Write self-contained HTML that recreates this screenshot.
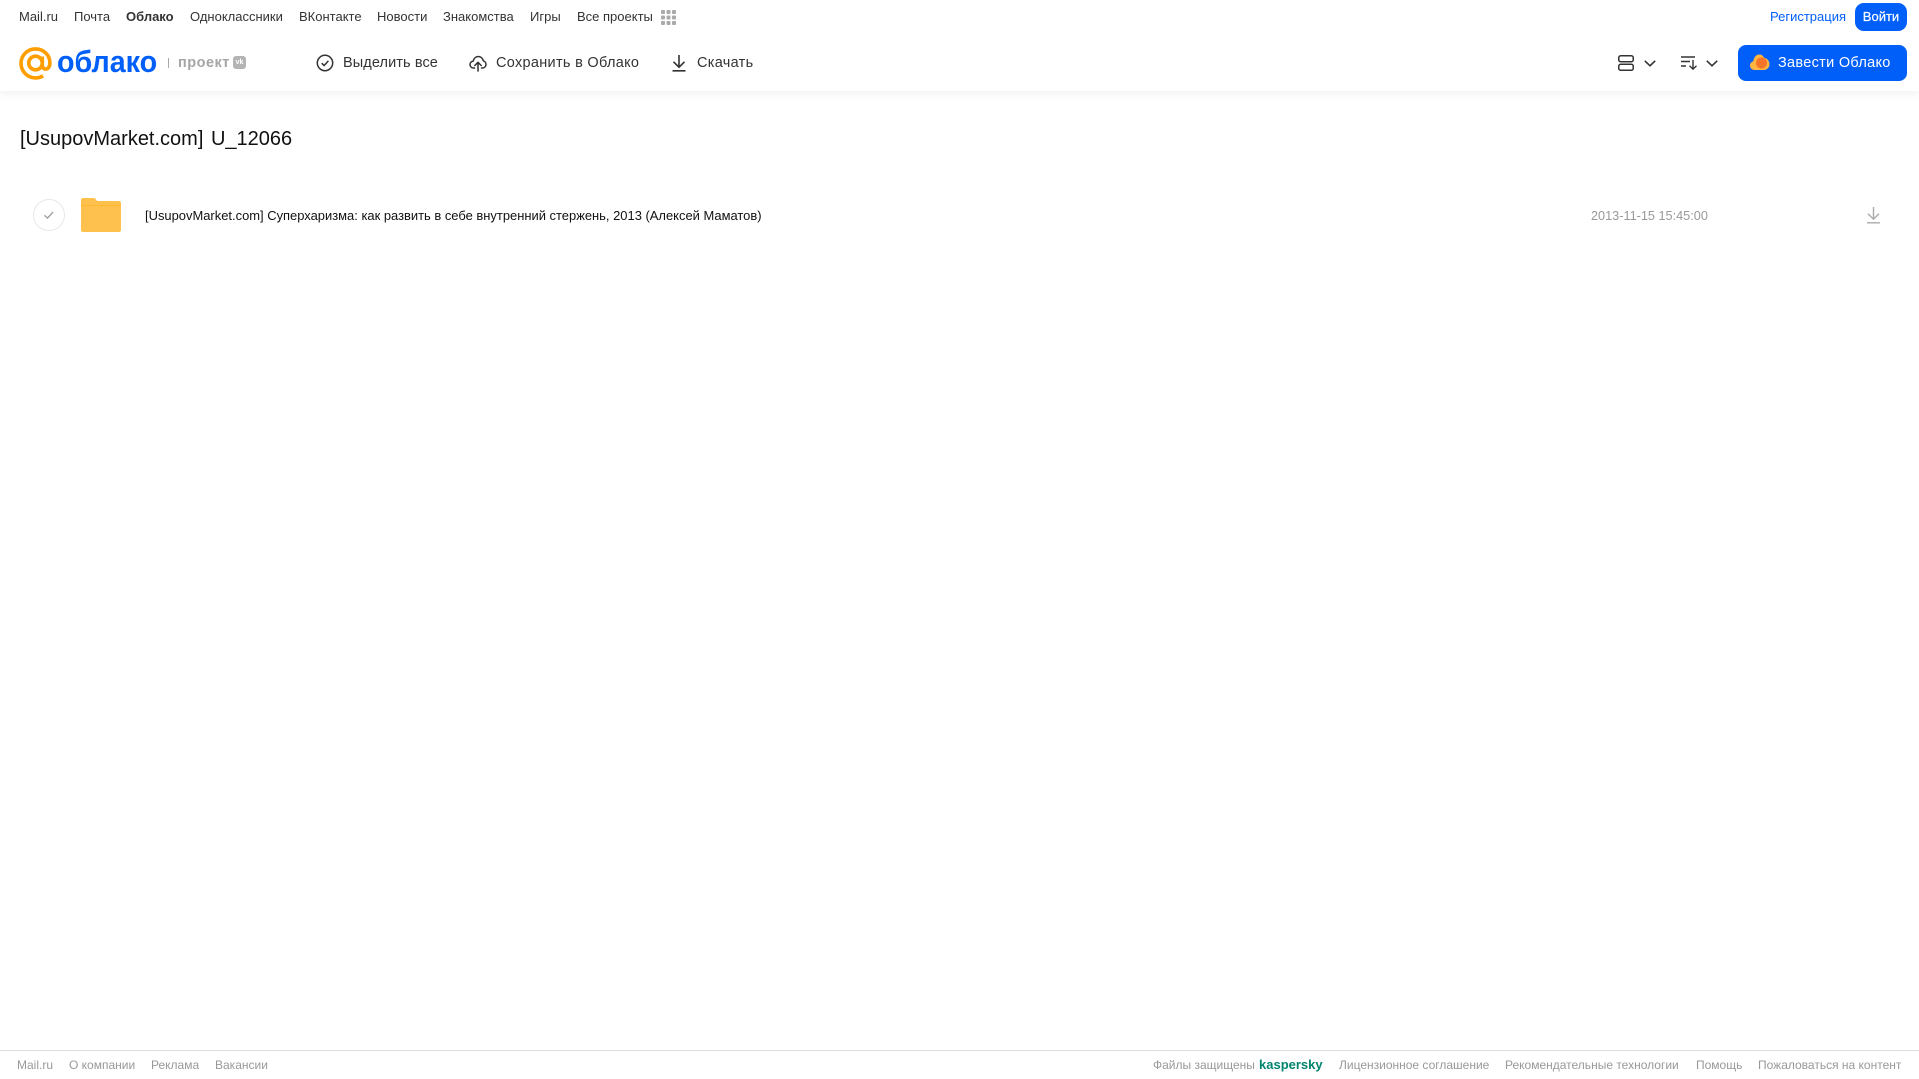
<!DOCTYPE html>
<html lang="ru"><head><meta charset="utf-8"><title>Облако</title>
<style>
html,body{margin:0;padding:0;background:#fff}
body{width:1919px;height:1079px;position:relative;overflow:hidden;font-family:"Liberation Sans","DejaVu Sans",sans-serif}
.t{position:absolute;white-space:nowrap;line-height:20px}
.n{font-size:13px;color:#333;top:7px}
.b{font-size:14.5px;color:#333;top:53px;letter-spacing:.3px}
.f{font-size:12px;color:#999;top:1055px}
svg{position:absolute;overflow:visible}
</style></head><body>
<div style="position:absolute;left:0;top:0;width:1919px;height:91px;background:#fff;box-shadow:0 2px 9px rgba(0,0,0,.07)"></div>

<span class="t n" style="left:19px">Mail.ru</span>
<span class="t n" style="left:74px">Почта</span>
<span class="t n" style="left:126px;font-weight:bold">Облако</span>
<span class="t n" style="left:190px">Одноклассники</span>
<span class="t n" style="left:299px">ВКонтакте</span>
<span class="t n" style="left:377px">Новости</span>
<span class="t n" style="left:443px">Знакомства</span>
<span class="t n" style="left:530px">Игры</span>
<span class="t n" style="left:577px">Все проекты</span>
<svg style="left:661px;top:10px" width="15" height="15" fill="#aaa"><rect width="4" height="4" rx="1"/><rect x="5.5" width="4" height="4" rx="1"/><rect x="11" width="4" height="4" rx="1"/><rect y="5.5" width="4" height="4" rx="1"/><rect x="5.5" y="5.5" width="4" height="4" rx="1"/><rect x="11" y="5.5" width="4" height="4" rx="1"/><rect y="11" width="4" height="4" rx="1"/><rect x="5.5" y="11" width="4" height="4" rx="1"/><rect x="11" y="11" width="4" height="4" rx="1"/></svg>

<span class="t" style="left:1770px;top:7px;font-size:13px;color:#005ff9">Регистрация</span>
<div class="t" style="left:1855px;top:3px;width:52px;height:28px;line-height:28px;border-radius:9px;background:#005ff9;color:#fff;font-size:13px;text-align:center;-webkit-text-stroke:.2px #fff">Войти</div>

<svg style="left:19px;top:47px" width="33" height="33" viewBox="0 0 33 33" fill="none" stroke="#ff9e00" stroke-width="3.6"><circle cx="16.5" cy="16" r="6.8"/><path d="M23.3 9.5v8.6c0 2.6 1.6 4 3.4 4 2.3 0 4.2-2.4 4.2-6.1C30.900 8 24.600 1.900 16.500 1.900 8.500 1.900 2 8.300 2 16.300c0 8.100 6.400 14.600 14.500 14.600 2.900 0 5.400-.7 7.600-2.100"/></svg>
<span class="t" style="left:57px;top:44px;font-size:31px;line-height:36px;color:#005ff9;font-weight:bold;transform-origin:left center;transform:scaleX(.925)">облако</span>
<div style="position:absolute;left:168px;top:58px;width:1px;height:10px;background:#aaa"></div>
<span class="t" style="left:178px;top:53px;font-size:14.500px;color:#a5a5a5;font-weight:bold;letter-spacing:.5px">проект</span>
<div class="t" style="left:233px;top:56px;width:13px;height:13px;border-radius:3px;background:#b4b4b4;color:#fff;font-size:7px;line-height:13px;text-align:center;font-weight:bold">vk</div>

<svg style="left:316px;top:54px" width="18" height="18" viewBox="0 0 18 18" fill="none" stroke="#333" stroke-width="1.500"><circle cx="9" cy="9" r="7.700"/><path d="M5.700 9.200l2.400 2.300 4.300-4.600"/></svg>
<span class="t b" style="left:343px;letter-spacing:.1px">Выделить все</span>
<svg style="left:469px;top:54px" width="18" height="18" viewBox="0 0 18 18" fill="none" stroke="#333" stroke-width="1.500" stroke-linejoin="round" stroke-linecap="round"><path d="M5.500 14H4.400C2.500 14 1 12.500 1 10.600c0-1.800 1.300-3.200 3.100-3.400C4.800 4.400 6.800 2.500 9.300 2.500c2.600 0 4.600 1.900 5 4.400 1.600.4 2.700 1.900 2.700 3.600 0 2-1.600 3.500-3.500 3.500h-1"/><path d="M9 17V8.500M5.800 11.500L9 8.300l3.200 3.200"/></svg>
<span class="t b" style="left:496px">Сохранить в Облако</span>
<svg style="left:672px;top:55px" width="14" height="17" viewBox="0 0 14 17" fill="none" stroke="#333" stroke-width="1.600"><path d="M7 0v12M1.500 6.800L7 12.200l5.500-5.400M.500 15.800h13"/></svg>
<span class="t b" style="left:697px">Скачать</span>

<svg style="left:1618px;top:55px" width="16" height="16" viewBox="0 0 16 16" fill="none" stroke="#333" stroke-width="1.500"><rect x=".75" y=".75" width="14.500" height="6" rx="2"/><rect x=".75" y="9.250" width="14.500" height="6" rx="2"/></svg>
<svg style="left:1644px;top:60px" width="12" height="7" fill="none" stroke="#333" stroke-width="1.600"><path d="M.8.800L6 5.800 11.200.800"/></svg>
<svg style="left:1681px;top:56px" width="17" height="14" viewBox="0 0 17 14" fill="none" stroke="#333" stroke-width="1.400"><path d="M0 1h14M0 5.500h9M0 10h5M12 4v9M8.500 9.800L12 13.200l3.500-3.400"/></svg>
<svg style="left:1706px;top:60px" width="12" height="7" fill="none" stroke="#333" stroke-width="1.600"><path d="M.8.800L6 5.800 11.200.800"/></svg>
<div style="position:absolute;left:1738px;top:45px;width:169px;height:36px;border-radius:8px;background:#005ff9"></div>
<svg style="left:1750px;top:54px" width="20" height="17" viewBox="0 0 20 17"><path d="M4.500 16C2 16 0 14 0 11.500 0 9.400 1.400 7.700 3.300 7.200 3.900 3.200 6 .5 9.200.5c2.400 0 4 1.300 4.800 3.300C17 4.200 19.500 7 19.500 10.300c0 3.200-2.500 5.700-5.500 5.700z" fill="#ffb540"/><circle cx="11.500" cy="9" r="5.500" fill="#f5742a"/></svg>
<span class="t" style="left:1778px;top:53px;font-size:14.500px;color:#fff;letter-spacing:.3px">Завести Облако</span>

<span class="t" style="left:20px;top:127px;font-size:20px;line-height:24px;color:#111;word-spacing:2px">[UsupovMarket.com] U_12066</span>

<svg style="left:33px;top:199px" width="32" height="32" viewBox="0 0 32 32" fill="none"><circle cx="16" cy="16" r="15.500" stroke="#e8e8e8"/><path d="M11.500 16.300l3 2.800 5.500-6" stroke="#999" stroke-width="1.300"/></svg>
<svg style="left:81px;top:198px" width="40" height="34" viewBox="0 0 40 34"><path d="M2 0h10c2 0 3 1 4 3h22c1.100 0 2 .9 2 2v27c0 1.100-.9 2-2 2H2c-1.100 0-2-.9-2-2V2C0 .9.900 0 2 0z" fill="#ffc14d"/><rect y="7" width="40" height="1" fill="#ffb733"/></svg>
<span class="t" style="left:145px;top:206px;font-size:12.950px;color:#111">[UsupovMarket.com] Суперхаризма: как развить в себе внутренний стержень, 2013 (Алексей Маматов)</span>
<span class="t" style="left:1591px;top:206px;font-size:12.700px;color:#999">2013-11-15 15:45:00</span>
<svg style="left:1867px;top:207px" width="13" height="17" viewBox="0 0 13 17" fill="none" stroke="#aaa" stroke-width="1.400"><path d="M6.500 0v12M1 6.800l5.500 5.400L12 6.800M0 15.800h13"/></svg>

<div style="position:absolute;left:0;top:1050px;width:1919px;height:1px;background:#ddd"></div>
<span class="t f" style="left:17px">Mail.ru</span>
<span class="t f" style="left:69px">О компании</span>
<span class="t f" style="left:151px">Реклама</span>
<span class="t f" style="left:215px">Вакансии</span>
<span class="t f" style="left:1153px">Файлы защищены</span>
<span class="t" style="left:1259px;top:1055px;font-size:13px;color:#00856f;font-weight:bold">kaspersky</span>
<span class="t f" style="left:1339px">Лицензионное соглашение</span>
<span class="t f" style="left:1505px">Рекомендательные технологии</span>
<span class="t f" style="left:1696px">Помощь</span>
<span class="t f" style="left:1758px">Пожаловаться на контент</span>
</body></html>
